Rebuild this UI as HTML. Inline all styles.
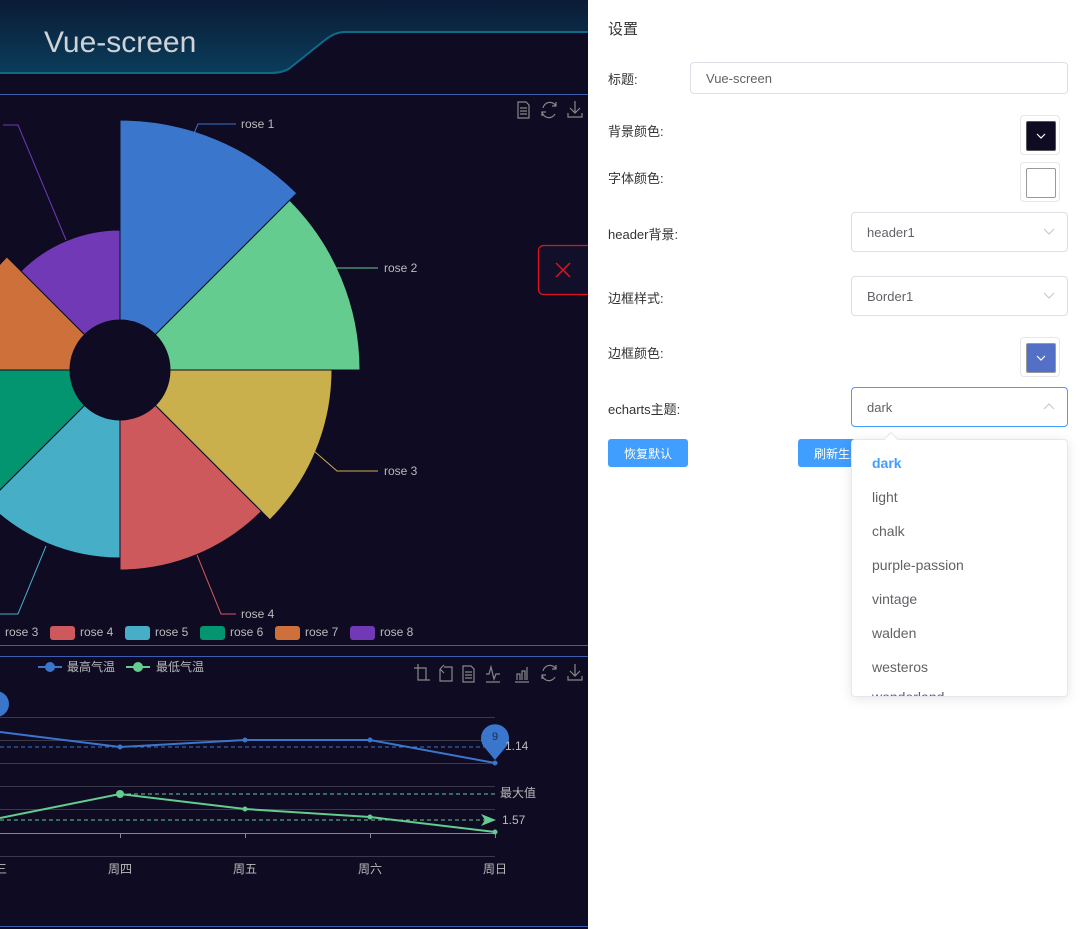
<!DOCTYPE html>
<html><head><meta charset="utf-8">
<style>
*{margin:0;padding:0;box-sizing:border-box}
body{width:1088px;height:929px;overflow:hidden;background:#0e0b22;font-family:"Liberation Sans","Noto Sans CJK SC",sans-serif;position:relative}
.panel{position:absolute;left:588px;top:0;width:500px;height:929px;background:#fff;color:#333}
.lbl{position:absolute;left:20px;font-size:13px;color:#333}
.inp{position:absolute;border:1px solid #dcdfe6;border-radius:4px;background:#fff;font-size:13px;color:#606266;padding-left:15px;display:flex;align-items:center}
.sw{position:absolute;width:40px;height:40px;border:1px solid #e6e6e6;border-radius:4px;background:#fff}
.sw div{position:absolute;left:5px;top:5px;width:30px;height:30px;border:1px solid #999;border-radius:2px}
.btn{position:absolute;height:28px;background:#409eff;color:#fff;font-size:12px;border-radius:3px;display:flex;align-items:center;justify-content:center}
.dd{position:absolute;left:851px;top:439px;width:217px;height:258px;background:#fff;border:1px solid #e4e7ed;border-radius:4px;box-shadow:0 2px 12px rgba(0,0,0,.1);overflow:hidden}
.dd div{height:34px;line-height:34px;padding-left:20px;font-size:14px;color:#606266}
.t{fill:#bbb;font-size:12px;font-family:"Liberation Sans","Noto Sans CJK SC",sans-serif}
.chev{position:absolute;right:12px;top:50%;margin-top:-4px}
</style></head><body>
<svg width="588" height="929" style="position:absolute;left:0;top:0">
<defs><linearGradient id="hg" x1="0" y1="0" x2="0" y2="1"><stop offset="0" stop-color="#0b1b36"/><stop offset="1" stop-color="#0a3d5a"/></linearGradient>
<linearGradient id="hg2" x1="0" y1="0" x2="0" y2="1"><stop offset="0" stop-color="#0b1b36"/><stop offset="1" stop-color="#0a2a48"/></linearGradient></defs>
<rect width="588" height="929" fill="#0e0b22"/>
<rect x="0" y="0" width="588" height="32" fill="url(#hg2)"/>
<path d="M0,0 H588 V32 H345 Q335,32 325,40 L290,68 Q283,73 270,73 H0 Z" fill="url(#hg)"/>
<path d="M588,32 H345 Q335,32 325,40 L290,68 Q283,73 270,73 H0" fill="none" stroke="#0f6a8a" stroke-width="2"/>
<text x="44" y="52" font-size="30" fill="#cfd3d8" font-family="Liberation Sans,sans-serif">Vue-screen</text>
<line x1="0" y1="94.5" x2="588" y2="94.5" stroke="#3a5fb0"/>
<line x1="0" y1="645.5" x2="588" y2="645.5" stroke="#3a5fb0"/>
<line x1="0" y1="656.5" x2="588" y2="656.5" stroke="#3a5fb0"/>
<line x1="0" y1="926.5" x2="588" y2="926.5" stroke="#3a5fb0"/>
<g stroke="#0e0b22" stroke-width="1" stroke-linejoin="round">
<path d="M120,320 L120,120 A250,250 0 0 1 296.8,193.2 L155.4,334.6 A50,50 0 0 0 120,320Z" fill="#3a76cc"/>
<path d="M155.4,334.6 L289.7,200.3 A240,240 0 0 1 360,370 L170,370 A50,50 0 0 0 155.4,334.6Z" fill="#64cc8e"/>
<path d="M170,370 L332,370 A212,212 0 0 1 269.9,519.9 L155.4,405.4 A50,50 0 0 0 170,370Z" fill="#c9b04c"/>
<path d="M155.4,405.4 L261.4,511.4 A200,200 0 0 1 120,570 L120,420 A50,50 0 0 0 155.4,405.4Z" fill="#cd595d"/>
<path d="M120,420 L120,558 A188,188 0 0 1 -12.9,502.9 L84.6,405.4 A50,50 0 0 0 120,420Z" fill="#47aec8"/>
<path d="M84.6,405.4 L-0.2,490.2 A170,170 0 0 1 -50,370 L70,370 A50,50 0 0 0 84.6,405.4Z" fill="#03956f"/>
<path d="M70,370 L-40,370 A160,160 0 0 1 6.9,256.9 L84.6,334.6 A50,50 0 0 0 70,370Z" fill="#cd703a"/>
<path d="M84.6,334.6 L21,271 A140,140 0 0 1 120,230 L120,320 A50,50 0 0 0 84.6,334.6Z" fill="#7239b7"/>
</g>
<g fill="none" stroke-width="1">
<polyline points="192,138 198,124 236,124" stroke="#3a76cc"/>
<polyline points="304,276 323,268 378,268" stroke="#64cc8e"/>
<polyline points="314,451 337,471 378,471" stroke="#c9b04c"/>
<polyline points="197,555 221,614 236,614" stroke="#cd595d"/>
<polyline points="46,546 18,614 0,614" stroke="#47aec8"/>
<polyline points="66,240 18,125 3,125" stroke="#7239b7"/>
</g>
<text class="t" x="241" y="128">rose 1</text><text class="t" x="384" y="272">rose 2</text><text class="t" x="384" y="475">rose 3</text><text class="t" x="241" y="618">rose 4</text>
<text class="t" x="5" y="636">rose 3</text>
<rect x="50" y="626" width="25" height="14" rx="3" fill="#cd595d"/><text class="t" x="80" y="636">rose 4</text>
<rect x="125" y="626" width="25" height="14" rx="3" fill="#47aec8"/><text class="t" x="155" y="636">rose 5</text>
<rect x="200" y="626" width="25" height="14" rx="3" fill="#03956f"/><text class="t" x="230" y="636">rose 6</text>
<rect x="275" y="626" width="25" height="14" rx="3" fill="#cd703a"/><text class="t" x="305" y="636">rose 7</text>
<rect x="350" y="626" width="25" height="14" rx="3" fill="#7239b7"/><text class="t" x="380" y="636">rose 8</text>
<g fill="none" stroke="#888" stroke-width="1.2">
<path d="M518,102h8l3,3v13h-11z M520,108h7 M520,111h7 M520,114h7"/>
<path d="M556,106a7,7 0 0 0 -13,2 M542,112a7,7 0 0 0 13,2 M556,102v4h-4 M542,116v-4h4"/>
<path d="M575,101v12 M570,108l5,5l5,-5 M568,113v4h14v-4"/>
<path d="M414,668h12v12 M418,664v16h12"/>
<path d="M440,669v12h12v-14h-8 M440,669l4,-4 M440,669l4,4"/>
<path d="M463,666h8l3,3v13h-11z M465,672h7 M465,675h7 M465,678h7"/>
<path d="M486,674h3l2,-7l3,12l2,-5h4 M486,682h14"/>
<path d="M515,682h14 M517,680v-6h3v6 M522,680v-9h3v9 M527,680v-13"/>
<path d="M556,669a7,7 0 0 0 -13,2 M542,675a7,7 0 0 0 13,2 M556,665v4h-4 M542,679v-4h4"/>
<path d="M575,664v12 M570,671l5,5l5,-5 M568,676v4h14v-4"/>
</g>
<line x1="38" y1="667" x2="62" y2="667" stroke="#3a76cc" stroke-width="2"/>
<circle cx="50" cy="667" r="5" fill="#3a76cc"/><text class="t" x="67" y="671">最高气温</text>
<line x1="126" y1="667" x2="150" y2="667" stroke="#64cc8e" stroke-width="2"/><circle cx="138" cy="667" r="5" fill="#64cc8e"/><text class="t" x="156" y="671">最低气温</text>
<g stroke="#3b3a4a" stroke-width="1">
<line x1="0" y1="717.5" x2="495" y2="717.5"/><line x1="0" y1="740.5" x2="495" y2="740.5"/><line x1="0" y1="763.5" x2="495" y2="763.5"/><line x1="0" y1="786.5" x2="495" y2="786.5"/><line x1="0" y1="809.5" x2="495" y2="809.5"/><line x1="0" y1="856.5" x2="495" y2="856.5"/>
</g>
<line x1="0" y1="833.5" x2="495" y2="833.5" stroke="#888"/>
<g stroke="#888"><line x1="120.5" y1="833" x2="120.5" y2="838"/><line x1="245.5" y1="833" x2="245.5" y2="838"/><line x1="370.5" y1="833" x2="370.5" y2="838"/><line x1="495.5" y1="833" x2="495.5" y2="838"/></g>
<line x1="0" y1="747" x2="490" y2="747" stroke="#3a76cc" stroke-dasharray="4,3"/>
<line x1="120" y1="794" x2="495" y2="794" stroke="#64cc8e" stroke-dasharray="4,3"/>
<line x1="0" y1="820" x2="490" y2="820" stroke="#64cc8e" stroke-dasharray="4,3"/>
<path d="M481,814 L496,820 L481,826 L485,820Z" fill="#64cc8e"/>
<polyline points="0,732 120,747 245,740 370,740 495,763" fill="none" stroke="#3a76cc" stroke-width="2"/>
<polyline points="0,818 120,794 245,809 370,817 495,832" fill="none" stroke="#64cc8e" stroke-width="2"/>
<g fill="#3a76cc"><circle cx="120" cy="747" r="2.5"/><circle cx="245" cy="740" r="2.5"/><circle cx="370" cy="740" r="2.5"/><circle cx="495" cy="763" r="2.5"/></g>
<g fill="#64cc8e"><circle cx="120" cy="794" r="4"/><circle cx="245" cy="809" r="2.5"/><circle cx="370" cy="817" r="2.5"/><circle cx="495" cy="832" r="2.5"/></g>
<path d="M495,760 L485,748 A14,14 0 1 1 505,748Z" fill="#3a76cc"/><text x="495" y="740" font-size="11" fill="#1a2a50" text-anchor="middle">9</text>
<circle cx="-4" cy="704" r="13" fill="#3a76cc"/>
<text class="t" x="505" y="750" font-size="12">1.14</text>
<text class="t" x="500" y="797">最大值</text>
<text class="t" x="502" y="824">1.57</text>
<text class="t" x="-5" y="873">三</text><text class="t" x="108" y="873">周四</text><text class="t" x="233" y="873">周五</text><text class="t" x="358" y="873">周六</text><text class="t" x="483" y="873">周日</text>
<rect x="538.5" y="245.5" width="60" height="49" rx="5" fill="#120f2a" stroke="#e0141e" stroke-width="1.3"/>
<path d="M556,263l14,14M570,263l-14,14" stroke="#e0141e" stroke-width="1.5"/>
</svg>
<div class="panel">
<div style="position:absolute;left:20px;top:18px;font-size:15px;color:#333">设置</div>
<div class="lbl" style="top:69px">标题:</div>
<div class="inp" style="left:102px;top:62px;width:378px;height:32px">Vue-screen</div>
<div class="lbl" style="top:121px">背景颜色:</div>
<div class="sw" style="left:432px;top:115px"><div style="background:#0e0b22;border-color:#555"></div><svg style="position:absolute;left:15px;top:17px" width="10" height="6"><path d="M1,1l4,4l4,-4" fill="none" stroke="#fff" stroke-width="1.2"/></svg></div>
<div class="lbl" style="top:168px">字体颜色:</div>
<div class="sw" style="left:432px;top:162px"><div style="background:#fff"></div></div>
<div class="lbl" style="top:224px">header背景:</div>
<div class="inp" style="left:263px;top:212px;width:217px;height:40px">header1<svg class="chev" width="12" height="7"><path d="M1,1l5,5l5,-5" fill="none" stroke="#c0c4cc"/></svg></div>
<div class="lbl" style="top:288px">边框样式:</div>
<div class="inp" style="left:263px;top:276px;width:217px;height:40px">Border1<svg class="chev" width="12" height="7"><path d="M1,1l5,5l5,-5" fill="none" stroke="#c0c4cc"/></svg></div>
<div class="lbl" style="top:343px">边框颜色:</div>
<div class="sw" style="left:432px;top:337px"><div style="background:#5470c6;border-color:#999"></div><svg style="position:absolute;left:15px;top:17px" width="10" height="6"><path d="M1,1l4,4l4,-4" fill="none" stroke="#fff" stroke-width="1.2"/></svg></div>
<div class="lbl" style="top:399px">echarts主题:</div>
<div class="inp" style="left:263px;top:387px;width:217px;height:40px;border-color:#409eff">dark<svg class="chev" width="12" height="7"><path d="M1,6l5,-5l5,5" fill="none" stroke="#c0c4cc"/></svg></div>
<div class="btn" style="left:20px;top:439px;width:80px">恢复默认</div>
<div class="btn" style="left:210px;top:439px;width:80px;justify-content:flex-start;padding-left:16px">刷新生成</div>
</div>
<div style="position:absolute;left:886px;top:434px;width:10px;height:10px;background:#fff;transform:rotate(45deg);border-left:1px solid #e4e7ed;border-top:1px solid #e4e7ed;z-index:2"></div>
<div class="dd" style="padding-top:6px">
<div style="color:#409eff;font-weight:bold">dark</div><div>light</div><div>chalk</div><div>purple-passion</div><div>vintage</div><div>walden</div><div>westeros</div><div style="margin-top:-4px">wonderland</div>
</div>
</body></html>
